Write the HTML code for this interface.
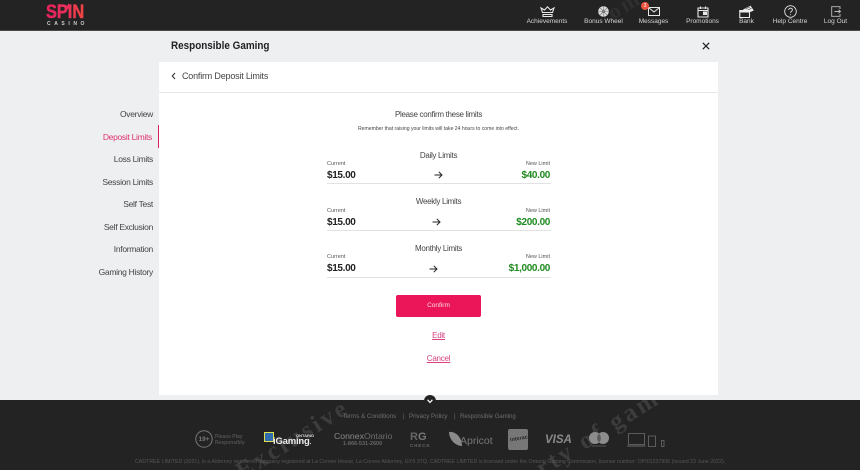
<!DOCTYPE html>
<html><head><meta charset="utf-8">
<style>
html,body{margin:0;padding:0}
body{width:860px;height:470px;overflow:hidden;position:relative;background:#eeeff1;font-family:"Liberation Sans",sans-serif;color:#333}
.a{position:absolute;white-space:nowrap}
.c{transform:translateX(-50%)}
#hd{position:absolute;left:0;top:0;width:860px;height:31px;background:#232323;border-bottom:1px solid #4a4a4a;box-sizing:border-box;overflow:hidden}
.nv{position:absolute;top:18px;font-size:6.500px;color:#d4d4d4;transform:translateX(-50%);white-space:nowrap}
svg{position:absolute;overflow:visible}
.side{position:absolute;right:707px;font-size:8.500px;letter-spacing:-.3px;color:#444;white-space:nowrap}
#panel{position:absolute;left:159px;top:62px;width:559px;height:333px;background:#fff}
#ft{position:absolute;left:0;top:400px;width:860px;height:70px;background:#232323;overflow:hidden}
.lbl{position:absolute;font-size:5.500px;color:#555;white-space:nowrap}
.amt{position:absolute;font-size:10px;letter-spacing:-.35px;font-weight:bold;color:#222;white-space:nowrap}
.new{position:absolute;font-size:10px;letter-spacing:-.35px;font-weight:bold;color:#1f8a1f;white-space:nowrap;right:310px}
.hr{position:absolute;left:327px;width:224px;height:1px;background:#e2e2e2}
.ttl{position:absolute;left:438.500px;transform:translateX(-50%);font-size:8px;letter-spacing:-.3px;color:#444;white-space:nowrap}
.lnk{position:absolute;left:438.500px;transform:translateX(-50%);font-size:8px;letter-spacing:-.25px;color:#d8417f;text-decoration:underline;white-space:nowrap}
.f{position:absolute;color:#7a7a7a;white-space:nowrap}
.w{position:absolute;white-space:nowrap;font:bold 25px/28px "Liberation Serif",serif;color:#3c3c3c;letter-spacing:3px;transform:rotate(-32deg);transform-origin:left top}
</style></head>
<body>
<div id="hd">
  <div class="a" style="left:603px;top:3px;font:bold 22px/26px 'Liberation Serif',serif;color:#2f2f2f;letter-spacing:3px;transform:rotate(-31deg);transform-origin:left top">om</div>
  <div class="a" style="left:46px;top:3px;font:bold 19px/20px 'Liberation Sans',sans-serif;background:linear-gradient(90deg,#e8205f,#e8305a 55%,#ef4a3a);-webkit-background-clip:text;background-clip:text;color:transparent;-webkit-text-stroke:.3px #e8305a;transform:scaleX(.86);transform-origin:left top">SPIN</div>
  <svg style="left:65px;top:2.500px" width="7" height="7" viewBox="0 0 7 7"><path d="M3.500 0 4.400 2.500 7 2.700 5 4.300 5.700 7 3.500 5.500 1.300 7 2 4.300 0 2.700 2.600 2.500Z" fill="#ec2f59"/></svg>
  <div class="a" style="left:47px;top:20.500px;font:bold 5px/6px 'Liberation Sans',sans-serif;color:#cfcfcf;letter-spacing:3.600px">CASINO</div>
  <svg style="left:540px;top:6px" width="15" height="11" viewBox="0 0 15 11" fill="none" stroke="#e8e8e8" stroke-width="1.100"><path d="M2.500 6.500 1 2 4.500 4 7.500 .8 10.500 4 14 2 12.500 6.500Z"/><path d="M3 8.500H12V10.500H3Z"/></svg>
  <svg style="left:597.500px;top:5.500px" width="11" height="11" viewBox="0 0 11 11"><circle cx="5.500" cy="5.500" r="5.300" fill="#dcdcdc"/><circle cx="5.500" cy="5.500" r="1.700" fill="#8a8a8a"/><path d="M5.500 .5V10.500M.5 5.500H10.500M2 2 9 9M9 2 2 9" stroke="#777" stroke-width=".6"/></svg>
  <svg style="left:648px;top:7px" width="12" height="9" viewBox="0 0 12 9" fill="none" stroke="#e8e8e8" stroke-width="1"><path d="M.5.500H11.500V8.500H.5Z"/><path d="M.5.500 6 5 11.500.5"/></svg>
  <div class="a" style="left:641px;top:2px;width:8px;height:8px;border-radius:50%;background:#e8533f;color:#fff;font-size:5px;line-height:8px;text-align:center">3</div>
  <svg style="left:697px;top:5.500px" width="12" height="12" viewBox="0 0 12 12" fill="none" stroke="#e8e8e8" stroke-width="1.100"><path d="M1 2H11V11H1Z"/><path d="M1 4.500H11M3.500.5V3M8.500.5V3"/><path d="M6.500 6H9.500V8.500H6.500Z" fill="#e8e8e8"/></svg>
  <svg style="left:739px;top:5px" width="15" height="13" viewBox="0 0 15 13"><path d="M4 4.500 11.500 .6 14.800 5.500 8 8.500Z" fill="#ececec"/><path d="M6.500 4 11 1.800M8 5.500 12.500 3.200" stroke="#444" stroke-width=".6"/><path d="M.8 5.500H10.500V12.500H.8Z" fill="#232323" stroke="#ececec" stroke-width="1.100"/><path d="M.8 5.500H10.500V7.500H.8Z" fill="#ececec"/></svg>
  <svg style="left:783.500px;top:4.500px" width="13" height="13" viewBox="0 0 13 13" fill="none" stroke="#e4e4e4" stroke-width=".9"><circle cx="6.500" cy="6.500" r="5.800"/><path d="M4.700 5C4.700 3.800 5.500 3.200 6.500 3.200 7.600 3.200 8.400 3.900 8.400 4.900 8.400 6.300 6.500 6.300 6.500 7.900"/><path d="M6.500 9.200V10.100"/></svg>
  <svg style="left:831px;top:6px" width="10" height="11" viewBox="0 0 10 11" fill="none" stroke="#bdbdbd" stroke-width=".9"><path d="M9 3V.7H.7V10.300H9V8"/><path d="M3.500 5.500H9.500M7.500 3.700 9.500 5.500 7.500 7.300"/></svg>
  <div class="nv" style="left:547px">Achievements</div>
  <div class="nv" style="left:603.500px">Bonus Wheel</div>
  <div class="nv" style="left:653.500px">Messages</div>
  <div class="nv" style="left:702.500px">Promotions</div>
  <div class="nv" style="left:746.500px">Bank</div>
  <div class="nv" style="left:790px">Help Centre</div>
  <div class="nv" style="left:835.500px">Log Out</div>
</div>

<div class="a" style="left:171px;top:39px;font-size:11px;font-weight:bold;color:#222;line-height:15px;transform:scaleX(.9);transform-origin:left top">Responsible Gaming</div>
<svg style="left:702px;top:42px" width="8" height="8" viewBox="0 0 8 8"><path d="M.8.800 7.200 7.200M7.200.800.800 7.200" stroke="#222" stroke-width="1.200"/></svg>

<div id="panel"></div>
<div class="a" style="left:159px;top:92px;width:559px;height:1px;background:#e6e6e6"></div>
<svg style="left:171px;top:72px" width="5" height="8" viewBox="0 0 5 8"><path d="M4 1 1.300 4 4 7" fill="none" stroke="#333" stroke-width="1.100"/></svg>
<div class="a" style="left:182px;top:70.500px;font-size:9px;letter-spacing:-.2px;line-height:11px;color:#444">Confirm Deposit Limits</div>

<div class="side" style="top:109px">Overview</div>
<div class="side" style="top:131.500px;right:708px;color:#e0356f">Deposit Limits</div>
<div class="a" style="left:158px;top:125px;width:1.200px;height:23px;background:#d81f5f"></div>
<div class="side" style="top:154px">Loss Limits</div>
<div class="side" style="top:176.500px">Session Limits</div>
<div class="side" style="top:199px">Self Test</div>
<div class="side" style="top:221.500px">Self Exclusion</div>
<div class="side" style="top:244px">Information</div>
<div class="side" style="top:266.500px">Gaming History</div>

<div class="ttl" style="top:110px">Please confirm these limits</div>
<div class="a c" style="left:438.500px;top:125.500px;font-size:5.100px;color:#444">Remember that raising your limits will take 24 hours to come into effect.</div>

<div class="ttl" style="top:150.500px">Daily Limits</div>
<div class="lbl" style="left:327px;top:160.500px">Current</div>
<div class="lbl" style="right:310px;top:160.500px">New Limit</div>
<div class="amt" style="left:327px;top:169.500px">$15.00</div>
<div class="new" style="top:169.500px">$40.00</div>
<svg style="left:433.500px;top:171px" width="9" height="8" viewBox="0 0 9 8"><path d="M.5 4H8M4.800.8 8 4 4.800 7.200" fill="none" stroke="#222" stroke-width="1"/></svg>
<div class="hr" style="top:183px"></div>

<div class="ttl" style="top:197px">Weekly Limits</div>
<div class="lbl" style="left:327px;top:207.500px">Current</div>
<div class="lbl" style="right:310px;top:207.500px">New Limit</div>
<div class="amt" style="left:327px;top:216.500px">$15.00</div>
<div class="new" style="top:216.500px">$200.00</div>
<svg style="left:431.500px;top:218px" width="9" height="8" viewBox="0 0 9 8"><path d="M.5 4H8M4.800.8 8 4 4.800 7.200" fill="none" stroke="#222" stroke-width="1"/></svg>
<div class="hr" style="top:230px"></div>

<div class="ttl" style="top:243.500px">Monthly Limits</div>
<div class="lbl" style="left:327px;top:254px">Current</div>
<div class="lbl" style="right:310px;top:254px">New Limit</div>
<div class="amt" style="left:327px;top:263px">$15.00</div>
<div class="new" style="top:263px">$1,000.00</div>
<svg style="left:428.500px;top:265px" width="9" height="8" viewBox="0 0 9 8"><path d="M.5 4H8M4.800.8 8 4 4.800 7.200" fill="none" stroke="#222" stroke-width="1"/></svg>
<div class="hr" style="top:277px"></div>

<div class="a" style="left:396px;top:295px;width:85px;height:22px;border-radius:2px;background:#eb1559;color:#fbdde8;font-size:6.500px;line-height:22px;text-align:center">Confirm</div>
<div class="lnk" style="top:330.500px">Edit</div>
<div class="lnk" style="top:353.500px">Cancel</div>

<div id="ft">
  <div class="w" style="left:231px;top:62px">Exclusive</div>
  <div class="w" style="left:531px;top:59px">rty of gam</div>

  <div class="f" style="left:342.500px;top:12.500px;font-size:6.200px;line-height:8px;color:#6e6e6e">Terms &amp; Conditions</div>
  <div class="f" style="left:403px;top:12.500px;font-size:6.200px;line-height:8px;color:#6e6e6e">|</div>
  <div class="f" style="left:409px;top:12.500px;font-size:6.200px;line-height:8px;color:#6e6e6e">Privacy Policy</div>
  <div class="f" style="left:454px;top:12.500px;font-size:6.200px;line-height:8px;color:#6e6e6e">|</div>
  <div class="f" style="left:460px;top:12.500px;font-size:6px;line-height:8px;color:#6e6e6e">Responsible Gaming</div>

  <svg style="left:195px;top:30px" width="18" height="18" viewBox="0 0 18 18" fill="none"><circle cx="9" cy="9" r="8.200" stroke="#777"/></svg>
  <div class="f" style="left:198.500px;top:35.500px;font-size:6.500px;font-weight:bold;line-height:8px">19+</div>
  <div class="f" style="left:215px;top:35px;font-size:5px;line-height:5.500px;color:#525252;font-weight:bold">Please Play<br>Responsibly</div>

  <div class="a" style="left:263.500px;top:32px;width:10px;height:10px;background:#2f6db0;border:1px solid #dfe04a;box-sizing:border-box"></div>
  <div class="a" style="left:273px;top:36px;font-size:9.500px;letter-spacing:-.2px;line-height:12px;font-weight:bold;color:#eee">iGaming<span style="font-size:6px">.</span></div>
  <div class="a" style="left:296px;top:32.500px;font-size:4px;line-height:5px;font-weight:bold;color:#ddd">ONTARIO</div>

  <div class="f" style="left:334px;top:30px;font-size:8.700px;line-height:12px;color:#888">Connex<span style="color:#6d6d6d">Ontario</span></div>
  <div class="f" style="left:343px;top:41px;font-size:5.500px;line-height:6px;font-weight:bold;color:#666">1-866-531-2600</div>

  <div class="f" style="left:410px;top:32px;font-size:11px;line-height:11px;font-weight:bold;color:#666">R<span style="color:#777">G</span></div>
  <div class="f" style="left:410px;top:43px;font-size:4.500px;line-height:5px;font-weight:bold;color:#666;letter-spacing:.9px">CHECK</div>

  <svg style="left:448px;top:31px" width="15" height="16" viewBox="0 0 15 16"><path d="M1 1C7 0 14 6 14 15 7 15 1 8 1 1Z" fill="#8a8a8a"/></svg>
  <div class="f" style="left:460px;top:35px;font-size:10.500px;line-height:13px;color:#777">Apricot</div>

  <div class="a" style="left:508px;top:29px;width:20px;height:21px;border-radius:2px;background:#777"></div>
  <div class="a" style="left:509.500px;top:36px;font-size:5.500px;line-height:6px;font-weight:bold;color:#2a2a2a;transform:rotate(-10deg)">Interac</div>

  <div class="a" style="left:545px;top:32px;font:italic bold 11.500px/16px 'Liberation Sans',sans-serif;color:#8a8a8a">VISA</div>

  <svg style="left:589px;top:32px" width="20" height="16" viewBox="0 0 20 16"><circle cx="6" cy="6" r="6" fill="#8c8c8c"/><circle cx="14" cy="6" r="6" fill="#8c8c8c"/><path d="M10 1.700C8.800 2.800 8.200 4.300 8.200 6S8.800 9.200 10 10.300C11.200 9.200 11.800 7.700 11.800 6S11.200 2.800 10 1.700Z" fill="#5a5a5a"/><path d="M3 14H17" stroke="#555" stroke-width="1"/></svg>

  <svg style="left:627px;top:33px" width="38" height="15" viewBox="0 0 38 15" fill="none" stroke="#6d6d6d" stroke-width=".8"><path d="M1.500.5H17.500V11.500H1.500Z"/><path d="M.2 13H18.500" stroke-width="1"/><path d="M21.500 3H28.500V13.500H21.500Z"/><path d="M34.500 7.500H37V13.500H34.500Z"/></svg>

  <div class="f" style="left:135px;top:58px;font-size:5.280px;line-height:8px;color:#565656">CADTREE LIMITED (2021), is a Alderney registered company registered at La Corvee House, La Corvee Alderney, GY9 3TQ. CADTREE LIMITED is licensed under the Ontario Gaming Commission, license number: OPI01237906 (issued 23 June 2022).</div>
</div>
<div class="a" style="left:424px;top:395px;width:12px;height:12px;border-radius:50%;background:#232323"></div>
<svg style="left:427px;top:398.500px" width="6" height="5" viewBox="0 0 6 5"><path d="M.6.800 3 3.500 5.400.8" fill="none" stroke="#fff" stroke-width="1.200"/></svg>
</body></html>
